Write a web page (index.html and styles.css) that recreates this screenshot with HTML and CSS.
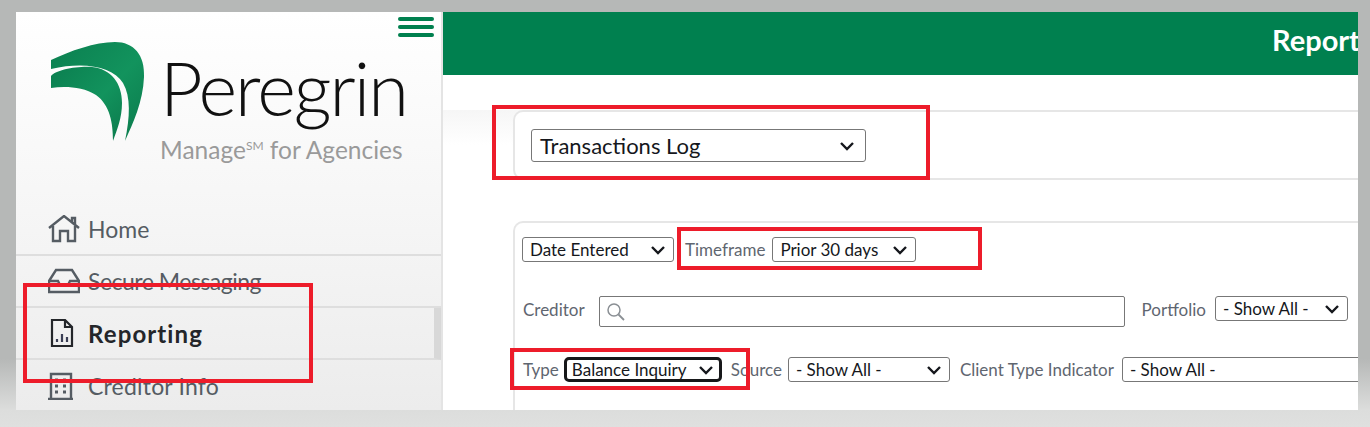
FILE: index.html
```html
<!DOCTYPE html>
<html lang="en">
<head>
    <meta charset="UTF-8">
    <meta name="viewport" content="width=device-width, initial-scale=1.0">
    <title>Reporting</title>
    <link rel="stylesheet" href="styles.css">
</head>
<body>
    <div class="window">
        <aside class="sidebar">
            <div class="menu-row">
                <div class="hamburger"><span></span><span></span><span></span></div>
            </div>
            <div class="logo">
                <svg class="swoosh" viewBox="50 42 96 102" width="96" height="102">
                    <defs>
                        <linearGradient id="leaf" x1="0" y1="0" x2="1" y2="1">
                            <stop offset="0" stop-color="#0b7f50"/>
                            <stop offset="0.55" stop-color="#12935d"/>
                            <stop offset="1" stop-color="#0b7a4c"/>
                        </linearGradient>
                    </defs>
                    <path d="M51 61C70 52 95 43 115 43C134 43 145 56 144 78C143 103 133 124 125 142C130 118 131 98 123 84C113 68 85 62 51 70Z" fill="url(#leaf)"/>
                    <path d="M51 77C56 71 76 67 92 68C111 70 122 84 122 104C122 119 117 131 113 142C113 124 110 106 96 96C83 88 66 87 51 89Z" fill="url(#leaf)"/>
                </svg>
                <div class="brand">
                    <div class="brand-name">Peregrin</div>
                    <div class="brand-sub">Manage<sup>SM</sup> for Agencies</div>
                </div>
            </div>
            <nav class="side-nav">
                <a class="nav-item" href="#">
                    <svg class="nav-icon" viewBox="0 0 32 28" width="32" height="28"><path d="M1 13L16 1L31 13M5 11V26H12V16H20V26H27V11M24 7V3H27V9" fill="none" stroke="currentColor" stroke-width="2.4"/></svg>
                    Home
                </a>
                <a class="nav-item" href="#">
                    <svg class="nav-icon" viewBox="0 0 32 28" width="32" height="28"><path d="M8 3H24L31 14V25H1V14ZM1 14H10L12 18H20L22 14H31" fill="none" stroke="currentColor" stroke-width="2.4"/></svg>
                    Secure Messaging
                </a>
                <a class="nav-item active" href="#">
                    <svg class="nav-icon" viewBox="0 0 32 28" width="32" height="28"><path d="M4 1H17L24 8V27H4ZM17 1V8H24" fill="none" stroke="currentColor" stroke-width="2.2"/><path d="M9 23V20M14 23V15M19 23V18" fill="none" stroke="#3b3f55" stroke-width="2.2"/></svg>
                    Reporting
                </a>
                <a class="nav-item" href="#">
                    <svg class="nav-icon" viewBox="0 0 32 28" width="32" height="28"><path d="M3 2H23V27H3ZM0 27H25" fill="none" stroke="currentColor" stroke-width="2.4"/><path d="M7 8H10M15 8H18M7 14H10M15 14H18M7 20H10M15 20H18" fill="none" stroke="currentColor" stroke-width="3"/></svg>
                    Creditor Info
                </a>
            </nav>
        </aside>

        <main class="content">
            <header class="banner"><h1>Reporting</h1></header>
            <div class="report-area">
                <section class="panel report-panel">
                    <div class="select large">
                        <span>Transactions Log</span>
                        <svg class="chevron" viewBox="0 0 16 10"><path d="M2 2L8 8L14 2" fill="none" stroke="currentColor" stroke-width="2.4"/></svg>
                    </div>
                </section>
                <section class="panel filter-panel">
                    <div class="filter-row first">
                        <div class="select date-by">
                            <span>Date Entered</span>
                            <svg class="chevron" viewBox="0 0 16 10"><path d="M2 2L8 8L14 2" fill="none" stroke="currentColor" stroke-width="2.4"/></svg>
                        </div>
                        <label class="timeframe-label">Timeframe</label>
                        <div class="select timeframe">
                            <span>Prior 30 days</span>
                            <svg class="chevron" viewBox="0 0 16 10"><path d="M2 2L8 8L14 2" fill="none" stroke="currentColor" stroke-width="2.4"/></svg>
                        </div>
                    </div>
                    <div class="filter-row second">
                        <label class="creditor-label">Creditor</label>
                        <div class="search-box">
                            <svg viewBox="0 0 20 20" width="20" height="20"><circle cx="8" cy="8" r="6" fill="none" stroke="#8a8f94" stroke-width="1.5"/><path d="M12.5 12.5L18 18" stroke="#8a8f94" stroke-width="1.8"/></svg>
                        </div>
                        <label class="portfolio-label">Portfolio</label>
                        <div class="select portfolio">
                            <span>- Show All -</span>
                            <svg class="chevron" viewBox="0 0 16 10"><path d="M2 2L8 8L14 2" fill="none" stroke="currentColor" stroke-width="2.4"/></svg>
                        </div>
                    </div>
                    <div class="filter-row third">
                        <label class="type-label">Type</label>
                        <div class="select type focused">
                            <span>Balance Inquiry</span>
                            <svg class="chevron" viewBox="0 0 16 10"><path d="M2 2L8 8L14 2" fill="none" stroke="currentColor" stroke-width="2.4"/></svg>
                        </div>
                        <label class="source-label">Source</label>
                        <div class="select source">
                            <span>- Show All -</span>
                            <svg class="chevron" viewBox="0 0 16 10"><path d="M2 2L8 8L14 2" fill="none" stroke="currentColor" stroke-width="2.4"/></svg>
                        </div>
                        <label class="client-label">Client Type Indicator</label>
                        <div class="select client">
                            <span>- Show All -</span>
                        </div>
                    </div>
                </section>
            </div>
        </main>
    </div>

    <!-- red annotation boxes drawn over the screenshot -->
    <div class="mark mark-report"></div>
    <div class="mark mark-timeframe"></div>
    <div class="mark mark-nav"></div>
    <div class="mark mark-type"></div>
</body>
</html>
```

FILE: styles.css
```css
html, body {
    height: 100%;
}

body {
    font-family: 'Lato', 'Open Sans', sans-serif;
    margin: 0;
    padding: 12px 12px 0 16px;
    box-sizing: border-box;
    overflow: hidden;
    position: relative;
    background: linear-gradient(#b6b8b7 0, #b6b8b7 84%, #dcdddc 96%, #dfe0df 100%);
}

.window {
    display: flex;
    width: 1342px;
    height: 398px;
    overflow: hidden;
    background-color: #fff;
}

/* sidebar */
.sidebar {
    width: 425px;
    flex: none;
    border-right: 2px solid #e4e4e4;
    background: linear-gradient(#ffffff 0, #f6f6f6 50%, #ececec 100%);
}

.menu-row {
    display: flex;
    justify-content: flex-end;
    padding: 5px 7px 0 0;
}

.hamburger {
    display: flex;
    flex-direction: column;
    gap: 4px;
    width: 36px;
}

.hamburger span {
    height: 4px;
    border-radius: 2px;
    background-color: #00804f;
}

.logo {
    display: flex;
    padding: 4px 0 0 34px;
    height: 167px;
    box-sizing: border-box;
}

.brand {
    margin-left: 14px;
}

.brand-name {
    font-size: 74px;
    font-weight: 300;
    line-height: 74px;
    letter-spacing: -2px;
    color: #111;
    margin-top: 10px;
}

.brand-sub {
    font-size: 24.5px;
    line-height: 30px;
    color: #9a9a9a;
    margin-top: 10px;
    white-space: nowrap;
}

.brand-sub sup {
    font-size: 12px;
    line-height: 0;
}

.side-nav {
    display: flex;
    flex-direction: column;
}

.nav-item {
    display: flex;
    align-items: center;
    gap: 8px;
    height: 52px;
    padding-left: 32px;
    box-sizing: border-box;
    border-bottom: 2px solid #dedede;
    color: #555c63;
    font-size: 23px;
    text-decoration: none;
    white-space: nowrap;
}

.nav-item:nth-child(2) {
    letter-spacing: -0.5px;
}

.nav-item:last-child {
    border-bottom: none;
    letter-spacing: 0.2px;
}

.nav-item.active {
    color: #24262a;
    font-size: 24px;
    font-weight: 700;
    letter-spacing: 1.1px;
    border-right: 7px solid #d8d8d8;
}

/* main area */
.content {
    flex: 1;
    min-width: 0;
}

.banner {
    height: 63px;
    box-sizing: border-box;
    padding: 0 0 8px 829px;
    background-color: #00804f;
    display: flex;
    align-items: center;
    overflow: hidden;
}

.banner h1 {
    margin: 0;
    font-size: 29px;
    color: #fff;
    white-space: nowrap;
}

.report-area {
    padding-left: 70px;
    height: 335px;
    background: linear-gradient(#f6f6f6 0, #ffffff 35px);
}

.panel {
    border: 2px solid #e6e6e6;
    border-right: none;
    border-radius: 10px 0 0 10px;
    background-color: #fff;
}

.report-panel {
    height: 70px;
    box-sizing: border-box;
    padding: 17px 0 0 16px;
    margin-top: 35px;
}

.filter-panel {
    margin-top: 41px;
    height: 200px;
    border-bottom: none;
    border-radius: 10px 0 0 0;
    padding: 14px 0 0 7px;
    box-sizing: border-box;
    color: #5f6670;
}

.filter-row {
    display: flex;
    white-space: nowrap;
    font-size: 17px;
}

.filter-row.second {
    margin-top: 34px;
}

.filter-row.third {
    margin-top: 30px;
}

.select {
    display: flex;
    align-items: center;
    justify-content: space-between;
    box-sizing: border-box;
    height: 25px;
    padding: 0 7px;
    border: 1px solid #777;
    border-radius: 3px;
    background-color: #fff;
    color: #15171c;
    font-size: 17px;
    flex: none;
}

.select.large {
    width: 335px;
    height: 33px;
    font-size: 22px;
    padding: 0 10px 0 8px;
}

.chevron {
    width: 16px;
    height: 10px;
    color: #15171c;
    flex: none;
}

label {
    align-self: center;
}

.date-by { width: 152px; }
.timeframe-label { margin-left: 11px; }
.timeframe { width: 144px; margin-left: 7px; }

.creditor-label { margin: 0 14px 0 1px; align-self: flex-start; line-height: 27px; }

.search-box {
    width: 526px;
    height: 31px;
    box-sizing: border-box;
    padding: 5px 0 0 6px;
    border: 1px solid #777;
    border-radius: 2px;
}

.portfolio-label { margin-left: 17px; align-self: flex-start; line-height: 27px; }
.portfolio { width: 133px; margin-left: 9px; }

.type-label { margin-left: 1px; }
.type {
    width: 158px;
    margin-left: 5px;
    border: 3px solid #17181a;
    border-radius: 5px;
    padding: 0 5px;
}

.source-label { margin-left: 9px; }
.source { width: 162px; margin-left: 6px; }
.client-label { margin-left: 10px; }
.client { width: 300px; margin-left: 8px; }

/* red annotation boxes */
.mark {
    position: absolute;
    box-sizing: border-box;
    border: 4px solid #ed1c2a;
}

.mark-report { left: 492px; top: 105px; width: 438px; height: 75px; }
.mark-timeframe { left: 677px; top: 227px; width: 305px; height: 43px; }
.mark-nav { left: 23px; top: 283px; width: 290px; height: 100px; }
.mark-type { left: 510px; top: 348px; width: 240px; height: 42px; }
```
